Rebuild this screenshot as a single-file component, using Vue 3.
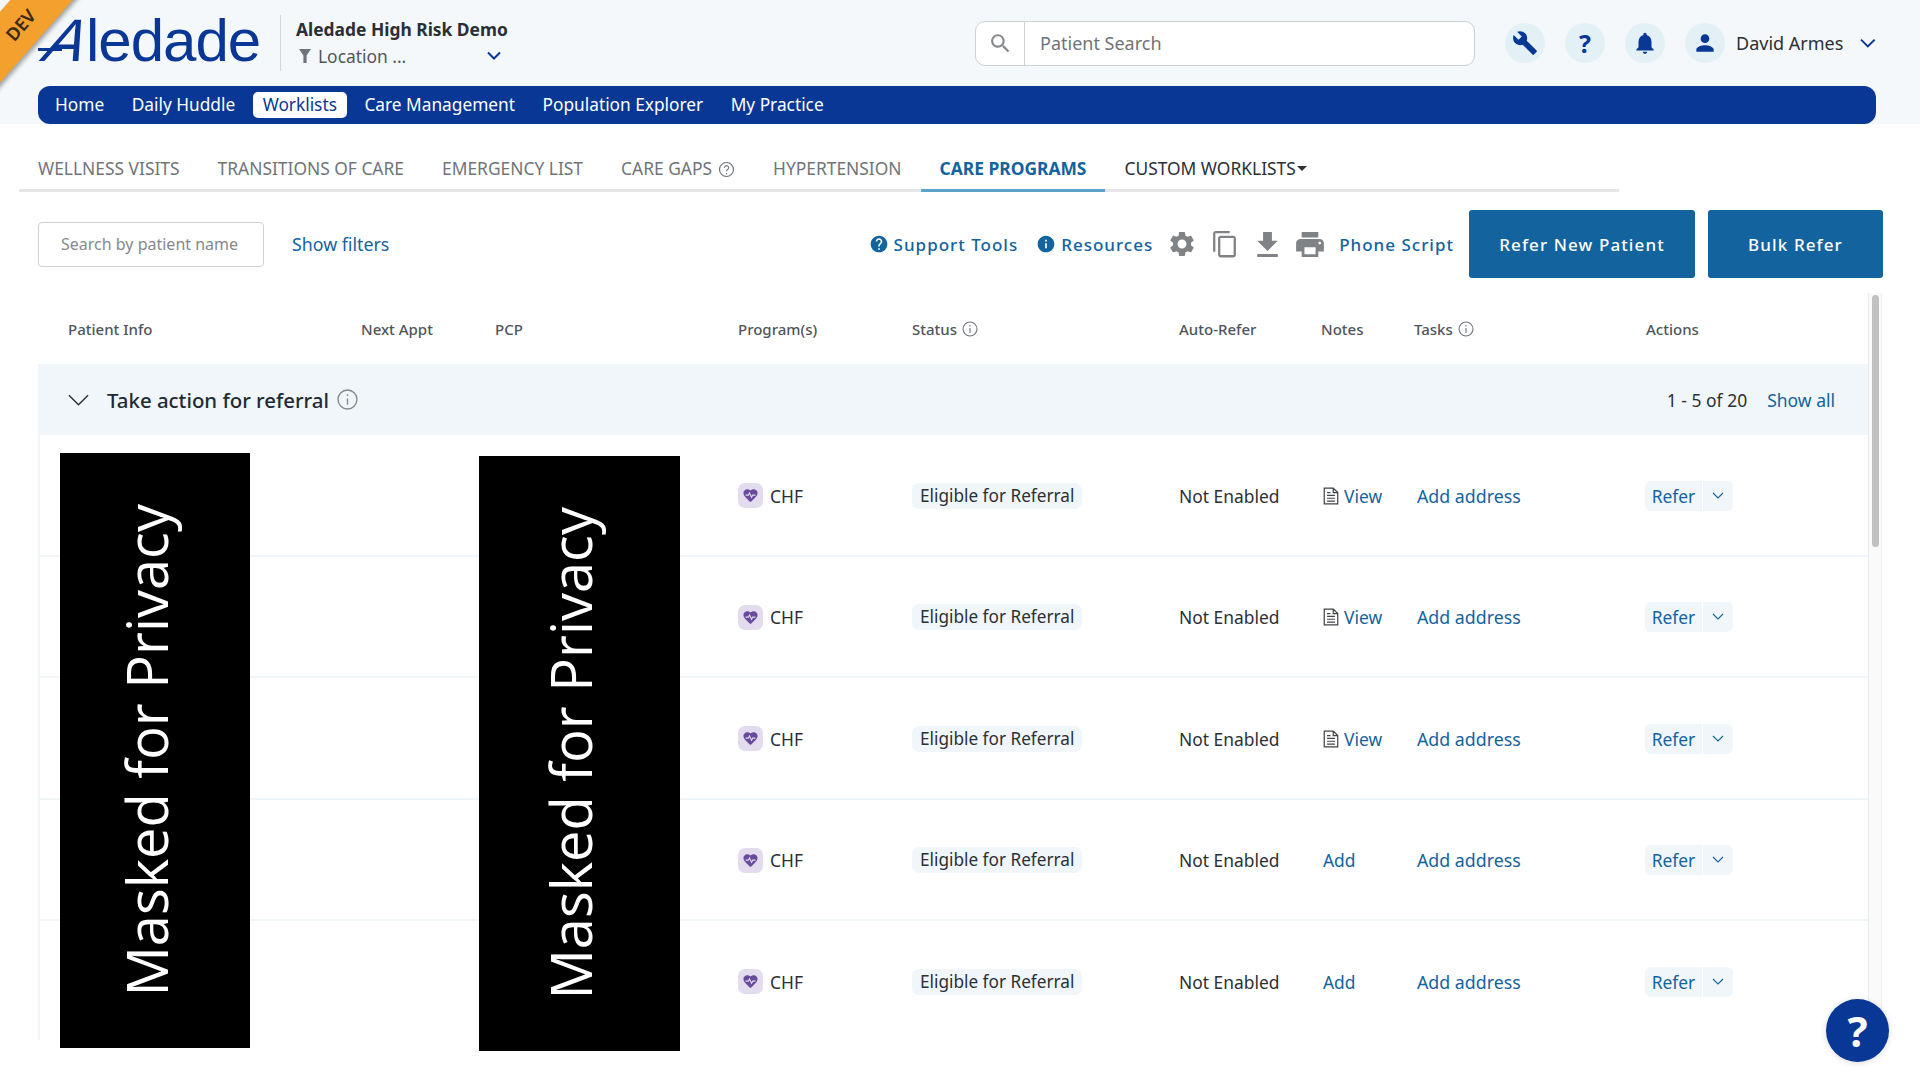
<template>
  <div class="page">
    <div class="ribbon"><span>DEV</span></div>

    <header class="top">
      <div class="top-row">
        <div class="logo"><span class="logo-a">A</span>ledade</div>
        <div class="org">
          <div class="org-name">Aledade High Risk Demo</div>
          <div class="org-loc">
            <svg class="filter-ico" viewBox="0 0 12 14"><path d="M0 0h12L7.6 6.4V14H4.4V6.4z" /></svg>
            <span>Location ...</span>
            <svg class="loc-chev" viewBox="0 0 14 10"><path d="M1 1.5l6 6 6-6" /></svg>
          </div>
        </div>
        <div class="search">
          <div class="search-ico">
            <svg viewBox="0 0 24 24"><path d="M15.5 14h-.79l-.28-.27C15.41 12.59 16 11.11 16 9.5 16 5.91 13.09 3 9.5 3S3 5.91 3 9.5 5.91 16 9.5 16c1.61 0 3.09-.59 4.23-1.57l.27.28v.79l5 4.99L20.49 19l-4.99-5zm-6 0C7.01 14 5 11.99 5 9.5S7.01 5 9.5 5 14 7.01 14 9.5 11.99 14 9.5 14z" /></svg>
          </div>
          <div class="search-text">Patient Search</div>
        </div>
        <div class="round">
          <svg viewBox="0 0 24 24"><path d="M22.7 19l-9.1-9.1c.9-2.3.4-5-1.5-6.9-2-2-5-2.400-7.400-1.300L9 6 6 9 1.600 4.700C.4 7.100.9 10.100 2.900 12.100c1.900 1.900 4.600 2.400 6.900 1.500l9.100 9.100c.4.4 1 .4 1.400 0l2.300-2.300c.5-.4.5-1.100.1-1.400z" /></svg>
        </div>
        <div class="round q">?</div>
        <div class="round">
          <svg viewBox="0 0 24 24"><path d="M12 22c1.1 0 2-.9 2-2h-4c0 1.1.9 2 2 2zm6-6v-5c0-3.07-1.63-5.64-4.5-6.32V4c0-.83-.67-1.5-1.5-1.5s-1.5.67-1.5 1.5v.68C7.64 5.36 6 7.92 6 11v5l-2 2v1h16v-1l-2-2z" /></svg>
        </div>
        <div class="round">
          <svg viewBox="0 0 24 24"><path d="M12 12c2.21 0 4-1.79 4-4s-1.79-4-4-4-4 1.79-4 4 1.79 4 4 4zm0 2c-2.67 0-8 1.34-8 4v2h16v-2c0-2.66-5.33-4-8-4z" /></svg>
        </div>
        <div class="user">David Armes</div>
        <svg class="user-chev" viewBox="0 0 16 10"><path d="M1 1.5l7 7 7-7" /></svg>
      </div>
      <nav class="nav">
        <a v-for="item in navItems" :key="item" class="nav-item" :class="{ on: item === 'Worklists' }">{{ item }}</a>
      </nav>
    </header>

    <div class="tabs">
      <a v-for="tab in tabs" :key="tab" class="tab" :class="{ active: tab === 'CARE PROGRAMS', dark: tab === 'CUSTOM WORKLISTS' }">
        {{ tab }}
        <svg v-if="tab === 'CARE GAPS'" class="tab-help" viewBox="0 0 16 16">
          <circle cx="8" cy="8" r="6.6" />
          <path d="M6 6.3a2 2 0 1 1 3 1.8c-.7.4-1 .8-1 1.6" />
          <path d="M8 11.3v1" />
        </svg>
        <i v-if="tab === 'CUSTOM WORKLISTS'" class="caret"></i>
      </a>
    </div>

    <div class="toolbar">
      <div class="name-search">Search by patient name</div>
      <a class="show-filters">Show filters</a>
      <div class="spacer"></div>
      <a class="tool-link">
        <svg viewBox="0 0 24 24"><path d="M12 2C6.48 2 2 6.48 2 12s4.48 10 10 10 10-4.48 10-10S17.52 2 12 2zm1 17h-2v-2h2v2zm2.07-7.75l-.9.92C13.45 12.9 13 13.5 13 15h-2v-.5c0-1.1.45-2.1 1.17-2.83l1.24-1.26c.37-.36.59-.86.59-1.41 0-1.1-.9-2-2-2s-2 .9-2 2H8c0-2.21 1.79-4 4-4s4 1.79 4 4c0 .88-.36 1.68-.93 2.25z" /></svg>
        Support Tools
      </a>
      <a class="tool-link second">
        <svg viewBox="0 0 24 24"><path d="M12 2C6.48 2 2 6.48 2 12s4.48 10 10 10 10-4.48 10-10S17.52 2 12 2zm1 15h-2v-6h2v6zm0-8h-2V7h2v2z" /></svg>
        Resources
      </a>
      <svg class="tool gear" viewBox="0 0 24 24"><path d="M19.14 12.94c.04-.3.06-.61.06-.94 0-.32-.02-.64-.07-.94l2.03-1.58c.18-.14.23-.41.12-.61l-1.92-3.32c-.12-.22-.37-.29-.59-.22l-2.39.96c-.5-.38-1.03-.7-1.62-.94l-.36-2.54c-.04-.24-.24-.41-.48-.41h-3.84c-.24 0-.43.17-.47.41l-.36 2.54c-.59.24-1.13.57-1.62.94l-2.39-.96c-.22-.08-.47 0-.59.22L2.74 8.87c-.12.21-.08.47.12.61l2.03 1.58c-.05.3-.09.63-.09.94s.02.64.07.94l-2.03 1.58c-.18.14-.23.41-.12.61l1.92 3.32c.12.22.37.29.59.22l2.39-.96c.5.38 1.03.7 1.62.94l.36 2.54c.05.24.24.41.48.41h3.84c.24 0 .44-.17.47-.41l.36-2.54c.59-.24 1.13-.56 1.62-.94l2.39.96c.22.08.47 0 .59-.22l1.92-3.32c.12-.22.07-.47-.12-.61l-2.01-1.58zM12 15.6c-1.98 0-3.6-1.62-3.6-3.6s1.62-3.6 3.6-3.6 3.6 1.62 3.6 3.6-1.62 3.6-3.6 3.6z" /></svg>
      <svg class="tool copy" viewBox="0 0 24 27"><path d="M17 1H3.6C2.2 1 1 2.2 1 3.6V21h2.2V3.2H17V1zm3.4 4.6H8.4C7 5.6 5.8 6.8 5.8 8.2v15.6C5.8 25.2 7 26.4 8.4 26.4h12c1.4 0 2.6-1.2 2.6-2.6V8.2c0-1.4-1.2-2.6-2.6-2.6zm.4 18.6H8V7.8h12.8v16.4z" /></svg>
      <svg class="tool down" viewBox="5 3 14 17"><path d="M19 9h-4V3H9v6H5l7 7 7-7zM5 18v2h14v-2H5z" /></svg>
      <svg class="tool print" viewBox="2 3 20 18"><path d="M19 8H5c-1.66 0-3 1.34-3 3v6h4v4h12v-4h4v-6c0-1.66-1.34-3-3-3zm-3 11H8v-5h8v5zm3-7c-.55 0-1-.45-1-1s.45-1 1-1 1 .45 1 1-.45 1-1 1zm-1-9H6v4h12V3z" /></svg>
      <a class="phone">Phone Script</a>
      <button class="btn refer-new">Refer New Patient</button>
      <button class="btn bulk">Bulk Refer</button>
    </div>

    <div class="table-wrap">
      <div class="table">
        <div class="grid head">
          <div v-for="col in columns" :key="col">
            {{ col }}
            <svg v-if="col === 'Status' || col === 'Tasks'" class="info-ico" viewBox="0 0 16 16">
              <circle cx="8" cy="8" r="7" />
              <path d="M8 7v5M8 4v1.400" />
            </svg>
          </div>
        </div>
        <div class="section">
          <svg class="sec-chev" viewBox="0 0 22 12"><path d="M1 1l10 10L21 1" /></svg>
          <span class="sec-title">Take action for referral</span>
          <svg class="sec-info" viewBox="0 0 20 20">
            <circle cx="10" cy="10" r="9" />
            <path d="M10 9v6M10 5v1.600" />
          </svg>
          <span class="spacer"></span>
          <span class="sec-count">1 - 5 of 20</span>
          <a class="sec-all">Show all</a>
        </div>
        <div v-for="row in rows" :key="row.id" class="grid row">
          <div></div>
          <div></div>
          <div></div>
          <div class="prog">
            <span class="badge">
              <svg viewBox="0 0 24 24">
                <path class="heart" d="M12 21.350l-1.450-1.320C5.400 15.360 2 12.280 2 8.500 2 5.420 4.420 3 7.500 3c1.740 0 3.410.81 4.500 2.090C13.090 3.810 14.760 3 16.500 3 19.580 3 22 5.420 22 8.500c0 3.780-3.400 6.860-8.550 11.540L12 21.350z" />
                <path class="pulse" d="M5 11.500h4l1.500-3 3 6 1.500-3h4" />
              </svg>
            </span>
            CHF
          </div>
          <div><span class="pill">Eligible for Referral</span></div>
          <div class="txt">Not Enabled</div>
          <div class="notes">
            <template v-if="row.hasNote">
              <svg class="doc" viewBox="0 0 14 16">
                <path d="M1 1h8l4 4v10H1zM9 1v4h4M3.500 7.500h7M3.500 10h7M3.500 12.500h7M3.500 5h3" />
              </svg>
              <a>View</a>
            </template>
            <a v-else class="add">Add</a>
          </div>
          <div class="task"><a>Add address</a></div>
          <div>
            <div class="refer">
              <span class="refer-main">Refer</span>
              <span class="refer-drop">
                <svg viewBox="0 0 12 8"><path d="M1 1l5 5 5-5" /></svg>
              </span>
            </div>
          </div>
        </div>
      </div>
      <div class="scroll"><div class="thumb"></div></div>
    </div>

    <div class="mask m1"><span>Masked for Privacy</span></div>
    <div class="mask m2"><span>Masked for Privacy</span></div>
    <div class="help">?</div>
  </div>
</template>

<script setup>
const navItems = ['Home', 'Daily Huddle', 'Worklists', 'Care Management', 'Population Explorer', 'My Practice']
const tabs = ['WELLNESS VISITS', 'TRANSITIONS OF CARE', 'EMERGENCY LIST', 'CARE GAPS', 'HYPERTENSION', 'CARE PROGRAMS', 'CUSTOM WORKLISTS']
const columns = ['Patient Info', 'Next Appt', 'PCP', 'Program(s)', 'Status', 'Auto-Refer', 'Notes', 'Tasks', 'Actions']
const rows = [
  { id: 1, hasNote: true },
  { id: 2, hasNote: true },
  { id: 3, hasNote: true },
  { id: 4, hasNote: false },
  { id: 5, hasNote: false },
]
</script>

<style>
html, body { margin: 0; background: #fff; }
</style>

<style scoped>
.page {
  position: relative;
  width: 1920px;
  height: 1080px;
  overflow: hidden;
  background: #fff;
  font-family: "Noto Sans", "Open Sans", sans-serif;
  color: #2b3037;
}
a { color: #13639e; text-decoration: none; }
.spacer { flex: 1; }

.ribbon {
  position: absolute;
  left: -55px;
  top: 1px;
  width: 150px;
  height: 47px;
  background: #f3a02e;
  transform: rotate(-48.7deg);
  box-shadow: 0 3px 4px rgba(0, 0, 0, .35);
  display: flex;
  align-items: center;
  justify-content: center;
  z-index: 3;
  font-size: 18px;
  font-weight: 600;
  color: #3a2a10;
}

.top {
  height: 124px;
  background: #f4f8fa;
  padding: 0 44px 0 38px;
  box-sizing: border-box;
}
.top-row {
  height: 86px;
  display: flex;
  align-items: center;
}
.logo {
  position: relative;
  width: 242px;
  height: 56px;
  margin-top: -4px;
  flex: none;
  font-family: "Liberation Sans", sans-serif;
  font-size: 60px;
  line-height: 56px;
  letter-spacing: -1px;
  color: #083796;
  white-space: nowrap;
}
.logo::before {
  content: "";
  position: absolute;
  left: 0;
  top: 35px;
  width: 24px;
  height: 3px;
  background: #083796;
}
.logo-a {
  display: inline-block;
  width: 48px;
  transform: skewX(-25deg);
  transform-origin: 0 49px;
}
.org {
  height: 56px;
  border-left: 1px solid #d5d8da;
  padding-left: 15px;
  width: 300px;
  flex: none;
  box-sizing: border-box;
}
.org-name {
  font-size: 17.4px;
  font-weight: 700;
  line-height: 24px;
  margin-top: 2px;
  color: #2b2f33;
}
.org-loc {
  display: flex;
  align-items: center;
  height: 30px;
  font-size: 17.4px;
  color: #50565c;
}
.filter-ico { width: 12px; height: 14px; margin: 0 7px 0 3px; fill: #6f7478; }
.loc-chev {
  width: 14px;
  height: 10px;
  margin-left: 81px;
  fill: none;
  stroke: #083796;
  stroke-width: 2;
}
.search {
  width: 500px;
  height: 45px;
  margin-left: 395px;
  margin-right: 30px;
  display: flex;
  flex: none;
  background: #fff;
  border: 1px solid #cfd1d3;
  border-radius: 10px;
  box-sizing: border-box;
}
.search-ico {
  width: 48px;
  border-right: 1px solid #cfd1d3;
  display: flex;
  align-items: center;
  justify-content: center;
}
.search-ico svg { width: 25px; height: 25px; fill: #85898c; }
.search-text {
  padding-left: 15px;
  font-size: 18px;
  line-height: 43px;
  color: #6f7377;
}
.round {
  width: 40px;
  height: 40px;
  margin-right: 20px;
  border-radius: 50%;
  background: #e3f1f6;
  display: flex;
  align-items: center;
  justify-content: center;
  flex: none;
}
.round svg { width: 26px; height: 26px; fill: #083796; }
.round.q { font-size: 25px; font-weight: 700; color: #083796; }
.user {
  margin-left: -9px;
  font-size: 18px;
  color: #2b2f33;
  white-space: nowrap;
}
.user-chev {
  width: 16px;
  height: 10px;
  margin-left: 17px;
  fill: none;
  stroke: #083796;
  stroke-width: 2;
}
.nav {
  height: 38px;
  background: #083796;
  border-radius: 12px;
  display: flex;
  align-items: center;
  padding-left: 7px;
}
.nav-item {
  font-size: 17.3px;
  color: #fff;
  padding: 0 10px;
  margin-right: 7.5px;
  height: 26px;
  line-height: 26px;
  border-radius: 5px;
  white-space: nowrap;
}
.nav-item.on { background: #fff; color: #083796; }

.tabs {
  display: flex;
  width: 1600px;
  height: 39px;
  margin: 26px 0 0 19px;
  border-bottom: 3px solid #e4e6e7;
}
.tab {
  height: 36px;
  padding: 0 19px 3px;
  font-size: 17.4px;
  color: #70757a;
  white-space: nowrap;
  display: flex;
  align-items: center;
  box-sizing: content-box;
  gap: 6px;
}
.tab.active {
  color: #13639e;
  font-weight: 700;
  border-bottom: 3px solid #5ba3cc;
}
.tab.dark { color: #2b3037; gap: 0; }
.tab-help {
  width: 17px;
  height: 17px;
  margin-top: 2px;
  fill: none;
  stroke: #70757a;
  stroke-width: 1.100;
}
.caret {
  width: 0;
  height: 0;
  margin-left: 1px;
  border: 5px solid transparent;
  border-top: 5px solid #2b3037;
  border-bottom: 0;
}

.toolbar {
  height: 68px;
  margin-top: 18px;
  padding: 0 37px 0 38px;
  display: flex;
  align-items: center;
}
.name-search {
  width: 226px;
  height: 45px;
  margin-top: 1px;
  box-sizing: border-box;
  border: 1px solid #cfd1d3;
  border-radius: 4px;
  padding-left: 22px;
  font-size: 16px;
  line-height: 43px;
  color: #85898d;
}
.show-filters { margin-left: 28px; font-size: 17.8px; }
.tool-link {
  display: flex;
  align-items: center;
  font-size: 17px;
  font-weight: 500;
  letter-spacing: 1px;
  white-space: nowrap;
}
.tool-link svg { width: 20px; height: 20px; margin-right: 5px; fill: #13639e; }
.tool-link.second { margin-left: 18px; }
.tool { fill: #7f8386; flex: none; }
.gear { width: 30px; height: 30px; margin-left: 14px; }
.copy { width: 25px; height: 28px; margin-left: 15px; }
.down { width: 21px; height: 25px; margin-left: 20px; }
.print { width: 28px; height: 25px; margin-left: 18px; }
.phone {
  margin-left: 15px;
  font-size: 17px;
  font-weight: 500;
  letter-spacing: 1px;
  white-space: nowrap;
}
.btn {
  height: 68px;
  border: 0;
  border-radius: 3px;
  background: #13639e;
  color: #fff;
  font-family: inherit;
  font-size: 17px;
  font-weight: 500;
  letter-spacing: 1.100px;
}
.refer-new { width: 226px; margin-left: 15px; }
.bulk { width: 175px; margin-left: 13px; }

.table-wrap {
  display: flex;
  height: 747px;
  margin: 15px 0 0 38px;
  width: 1844px;
  overflow: hidden;
}
.table { width: 1830px; flex: none; }
.grid {
  display: grid;
  grid-template-columns: 293px 134px 243px 174px 267px 142px 93px 232px 1fr;
  padding-left: 30px;
  align-items: center;
}
.head {
  height: 71px;
  font-size: 15px;
  font-weight: 500;
  color: #4f555b;
}
.head > div { display: flex; align-items: center; gap: 5px; }
.info-ico {
  width: 16px;
  height: 16px;
  fill: none;
  stroke: #70757a;
  stroke-width: 1.100;
}
.section {
  height: 71px;
  background: #f0f6fa;
  display: flex;
  align-items: center;
  padding: 0 33px 0 30px;
}
.sec-chev {
  width: 21px;
  height: 12px;
  fill: none;
  stroke: #2b3037;
  stroke-width: 1.500;
}
.sec-title {
  margin-left: 18px;
  font-size: 20.4px;
  font-weight: 500;
  color: #222a33;
}
.sec-info {
  width: 21px;
  height: 21px;
  margin-left: 8px;
  fill: none;
  stroke: #85898d;
  stroke-width: 1.300;
}
.sec-count { font-size: 17.500px; }
.sec-all { margin-left: 20px; font-size: 17.500px; color: #13639e; }
.row {
  height: 121.500px;
  box-sizing: border-box;
  border-bottom: 2px solid #f0f6f8;
  border-left: 2px solid #f0f6f8;
  padding-left: 28px;
  padding-top: 2px;
  font-size: 17.400px;
}
.prog { display: flex; align-items: center; gap: 7px; color: #2b3037; }
.badge {
  width: 25px;
  height: 25px;
  border-radius: 7px;
  background: #e3dcee;
  display: flex;
  align-items: center;
  justify-content: center;
}
.badge svg { width: 17px; height: 17px; }
.heart { fill: #6a4a9c; }
.pulse { fill: none; stroke: #e3dcee; stroke-width: 1.500; }
.pill {
  display: inline-block;
  height: 26px;
  line-height: 26px;
  margin-top: -2px;
  padding: 0 8px;
  border-radius: 7px;
  background: #f0f6fa;
  font-size: 17.200px;
}
.notes { display: flex; align-items: center; gap: 5px; padding-left: 2px; }
.doc {
  width: 16px;
  height: 18px;
  fill: none;
  stroke: #3f4449;
  stroke-width: 1.100;
}
.task { padding-left: 3px; font-size: 17.800px; }
.refer {
  display: inline-flex;
  height: 30px;
  width: 88px;
  margin-left: -1px;
  border-radius: 6px;
  background: #f0f6fa;
  align-items: center;
}
.refer-main {
  width: 57px;
  text-align: center;
  color: #13639e;
  border-right: 1px solid #fff;
  line-height: 30px;
}
.refer-drop { flex: 1; display: flex; justify-content: center; }
.refer-drop svg {
  width: 12px;
  height: 8px;
  fill: none;
  stroke: #13639e;
  stroke-width: 1.100;
}

.scroll {
  width: 14px;
  flex: none;
  background: #fafafa;
  border-left: 1px solid #e6ecf1;
  border-right: 1px solid #eeeeee;
  box-sizing: border-box;
  padding-left: 3px;
}
.thumb {
  width: 7px;
  height: 252px;
  margin-top: 2px;
  border-radius: 4px;
  background: #c1c1c1;
}

.mask {
  position: absolute;
  background: #000;
  color: #fff;
  display: flex;
  align-items: center;
  justify-content: center;
  box-sizing: border-box;
  padding-right: 19px;
  font-family: "Open Sans", sans-serif;
  font-size: 56px;
  white-space: nowrap;
}
.mask span { writing-mode: vertical-rl; transform: rotate(180deg); }
.m1 { left: 60px; top: 453px; width: 190px; height: 595px; }
.m2 { left: 479px; top: 456px; width: 201px; height: 595px; }

.help {
  position: absolute;
  left: 1826px;
  top: 999px;
  width: 63px;
  height: 63px;
  border-radius: 50%;
  background: #083796;
  color: #fff;
  font-size: 42px;
  font-weight: 700;
  line-height: 63px;
  text-align: center;
  box-shadow: 0 1px 6px rgba(0, 0, 0, .15);
}
</style>
